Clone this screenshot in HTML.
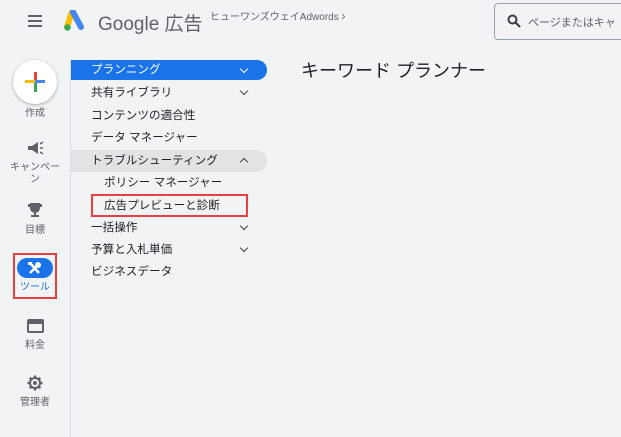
<!DOCTYPE html>
<html><head><meta charset="utf-8"><style>
body{margin:0;width:621px;height:437px;background:#f1f3f4;font-family:"Liberation Sans","Noto Sans CJK JP",sans-serif;position:relative;overflow:hidden;color:#202124}
.a{position:absolute;white-space:nowrap}
.m{position:absolute;left:91px;font-size:11.6px;line-height:14px}
.chev{position:absolute;left:241px;width:5px;height:5px;border-right:1.6px solid #444;border-bottom:1.6px solid #444;transform:rotate(45deg)}
.lbl{position:absolute;width:70px;left:0;text-align:center;font-size:10px;color:#5f6368;line-height:12px}
</style></head><body>
<div class="a" style="left:28px;top:15px;width:14px;height:2px;background:#5f6368;box-shadow:0 5px 0 #5f6368,0 10px 0 #5f6368"></div>
<svg class="a" style="left:64px;top:10px" width="24" height="22" viewBox="0 0 24 22"><path d="M8 2 L3 17" stroke="#fbbc04" stroke-width="6" stroke-linecap="round"/><path d="M9 2 L17 17" stroke="#4285f4" stroke-width="6" stroke-linecap="round"/><circle cx="3.5" cy="17.5" r="3.2" fill="#34a853"/></svg>
<div class="a" style="left:98px;top:9px;font-size:19px;color:#5f6368">Google 広告</div>
<div class="a" style="left:210px;top:8px;font-size:10px;color:#5f6368">ヒューワンズウェイAdwords <span style="font-size:12px">›</span></div>
<div class="a" style="left:494px;top:3px;width:140px;height:37px;border:1px solid #9aa0a6;border-radius:4px;box-sizing:border-box"></div>
<svg class="a" style="left:507px;top:14px" width="14" height="14" viewBox="0 0 14 14"><circle cx="5.5" cy="5.5" r="4" fill="none" stroke="#3c4043" stroke-width="2"/><path d="M8.5 8.5 L13 13" stroke="#3c4043" stroke-width="2.2"/></svg>
<div class="a" style="left:528px;top:14px;font-size:11px;color:#5f6368">ページまたはキャ</div>
<div class="a" style="left:70px;top:60px;width:1px;height:377px;background:#dadce0"></div>
<div class="a" style="left:13px;top:60px;width:44px;height:44px;border-radius:50%;background:#fff;box-shadow:0 1px 3px rgba(0,0,0,.3)"></div>
<div class="a" style="left:34px;top:72px;width:3px;height:10px;background:#ea4335"></div>
<div class="a" style="left:34px;top:82px;width:3px;height:10px;background:#34a853"></div>
<div class="a" style="left:25px;top:80px;width:10px;height:3px;background:#fbbc04"></div>
<div class="a" style="left:35px;top:80px;width:10px;height:3px;background:#4285f4"></div>
<div class="lbl" style="top:108px">作成</div>
<svg class="a" style="left:27px;top:141px" width="17" height="14" viewBox="0 0 17 14"><path d="M1 5h4l6-4v12l-6-4H1z" fill="#5f6368"/><path d="M13 3l3-2M13 7h3M13 11l3 2" stroke="#5f6368" stroke-width="1.5"/></svg>
<div class="lbl" style="top:162px">キャンペー<br>ン</div>
<svg class="a" style="left:27px;top:202px" width="16" height="16" viewBox="0 0 16 16"><path d="M3 1h10v5a5 5 0 0 1-10 0z M1 2h2v3H1z M13 2h2v3h-2z" fill="#5f6368"/><rect x="7" y="10" width="2" height="3" fill="#5f6368"/><rect x="4" y="13" width="8" height="2" fill="#5f6368"/></svg>
<div class="lbl" style="top:225px">目標</div>
<div class="a" style="left:13px;top:253px;width:44px;height:46px;border:2px solid #ea3f3f;box-sizing:border-box"></div>
<div class="a" style="left:17px;top:258px;width:36px;height:20px;border-radius:10px;background:#1a73e8"></div>
<svg class="a" style="left:27px;top:261px" width="15" height="14" viewBox="0 0 15 14"><path d="M3 12 L10 5" stroke="#fff" stroke-width="2.5"/><circle cx="11" cy="4" r="3" fill="#fff"/><path d="M3 2 L12 12" stroke="#fff" stroke-width="2.5"/><rect x="1" y="1" width="4" height="3" fill="#fff"/></svg>
<div class="lbl" style="top:282px;color:#1a73e8">ツール</div>
<div class="a" style="left:27px;top:319px;width:17px;height:14px;border:2px solid #5f6368;border-radius:2px;box-sizing:border-box;border-top-width:5px"></div>
<div class="lbl" style="top:340px">料金</div>
<svg class="a" style="left:27px;top:375px" width="16" height="16" viewBox="0 0 16 16"><circle cx="8" cy="8" r="5" fill="none" stroke="#5f6368" stroke-width="2"/><path d="M8 0.5v3M8 12.5v3M0.5 8h3M12.5 8h3M2.7 2.7l2.1 2.1M11.2 11.2l2.1 2.1M2.7 13.3l2.1-2.1M11.2 4.8l2.1-2.1" stroke="#5f6368" stroke-width="2.5"/><circle cx="8" cy="8" r="2" fill="#5f6368"/></svg>
<div class="lbl" style="top:397px">管理者</div>
<div class="a" style="left:71px;top:60px;width:196px;height:20px;background:#1a73e8;border-radius:0 10px 10px 0"></div>
<div class="m" style="top:63px;color:#fff">プランニング</div>
<div class="chev" style="top:66px;border-color:#fff"></div>
<div class="m" style="top:86px">共有ライブラリ</div><div class="chev" style="top:88px"></div>
<div class="m" style="top:109px">コンテンツの適合性</div>
<div class="m" style="top:131px">データ マネージャー</div>
<div class="a" style="left:71px;top:150px;width:196px;height:22px;background:#e2e3e5;border-radius:0 11px 11px 0"></div>
<div class="m" style="top:154px">トラブルシューティング</div>
<div class="chev" style="top:159px;transform:rotate(225deg)"></div>
<div class="m" style="top:176px;left:104px">ポリシー マネージャー</div>
<div class="a" style="left:91px;top:194px;width:157px;height:23px;border:2px solid #ea3f3f;box-sizing:border-box"></div>
<div class="m" style="top:199px;left:104px">広告プレビューと診断</div>
<div class="m" style="top:221px">一括操作</div><div class="chev" style="top:223px"></div>
<div class="m" style="top:243px">予算と入札単価</div><div class="chev" style="top:245px"></div>
<div class="m" style="top:265px">ビジネスデータ</div>
<div class="a" style="left:301px;top:57px;font-size:18px;color:#202124">キーワード プランナー</div>
</body></html>
